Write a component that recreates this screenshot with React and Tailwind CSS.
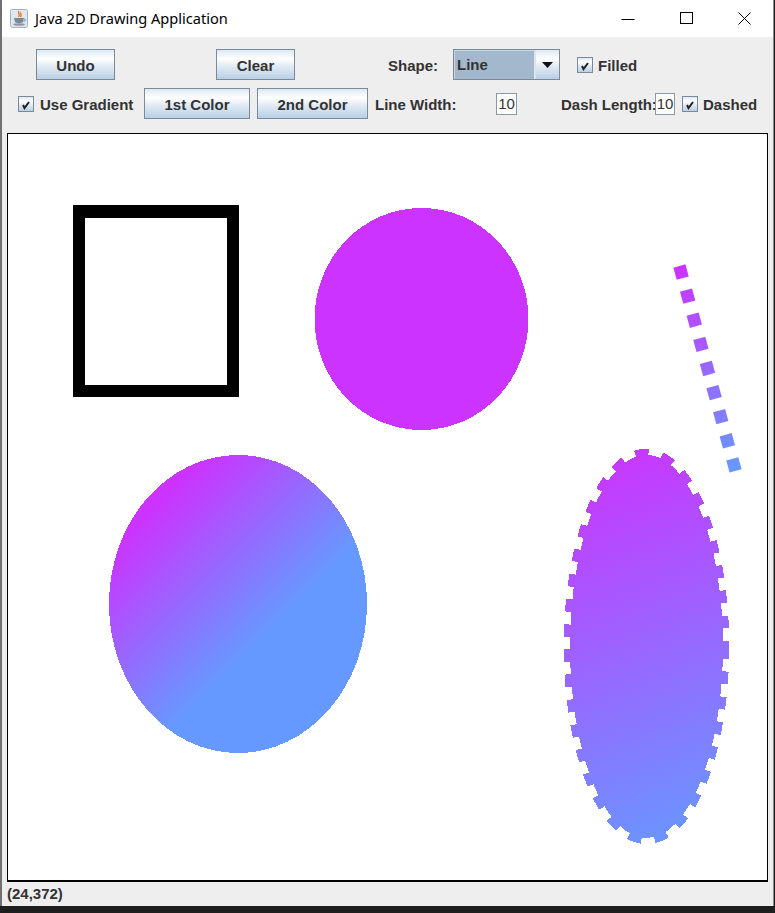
import React from 'react';

const FONT = { fontFamily: '"Liberation Sans", Arial, sans-serif' };
const METAL = 'bg-[linear-gradient(to_bottom,#dde8f3_0%,#ffffff_30%,#dde8f3_60%,#b8cfe5_100%)]';

const MetalButton = ({ label, className = '' }) => (
    <div className={`h-[31px] flex items-center justify-center pt-[4px] border border-[#7a8a99] ${METAL} text-[15px] font-bold text-[#333333] shrink-0 ${className}`}>
        {label}
    </div>
);

const MetalCheck = ({ className = '' }) => (
    <div className={`w-[16px] h-[16px] border border-[#7a8a99] ${METAL} shrink-0 flex items-center justify-center ${className}`}>
        <svg width="14" height="14" viewBox="0 0 14 14">
            <path d="M4 8 L5.5 11 L10 5" fill="none" stroke="#222" strokeWidth="2" />
        </svg>
    </div>
);

const Label = ({ text, className = '' }) => (
    <div className={`pt-[4px] text-[15px] font-bold text-[#333333] whitespace-nowrap shrink-0 ${className}`}>{text}</div>
);

const Field = ({ value, className = '' }) => (
    <div className={`h-[22px] bg-white border border-[#8a99a8] flex items-center justify-center pt-[2px] text-[15px] text-[#333333] shrink-0 ${className}`}>
        {value}
    </div>
);

const JavaIcon = () => (
    <svg width="18" height="19" viewBox="0 0 18 19">
        <rect x="0.5" y="0.5" width="17" height="18" rx="2" fill="#dfe8f1" stroke="#a3b0bd" />
        <path d="M9 2 C7 4, 11 5, 8.5 8 M11 3.5 C10 5, 12 6, 10.5 8" fill="none" stroke="#e8761c" strokeWidth="1.4" />
        <path d="M4 9 L14 9 L13 13 C12 14.5, 6 14.5, 5 13 Z" fill="#7b8794" />
        <path d="M14 10 C16 10, 16 12.5, 13.5 12.5" fill="none" stroke="#7b8794" strokeWidth="1" />
        <ellipse cx="9" cy="15.5" rx="6" ry="1.3" fill="#8d99a5" />
    </svg>
);

const Canvas = () => (
    <svg width="759" height="746" viewBox="8 134 759 746" className="block">
        <defs>
            <linearGradient id="g1" gradientUnits="userSpaceOnUse" x1="180" y1="480" x2="300" y2="600">
                <stop offset="0" stopColor="#cc33ff" />
                <stop offset="1" stopColor="#6699ff" />
            </linearGradient>
            <linearGradient id="g2" gradientUnits="userSpaceOnUse" x1="570" y1="455" x2="723" y2="838">
                <stop offset="0" stopColor="#cc33ff" />
                <stop offset="1" stopColor="#6699ff" />
            </linearGradient>
            <linearGradient id="g3" gradientUnits="userSpaceOnUse" x1="679.4" y1="266" x2="735.6" y2="471">
                <stop offset="0" stopColor="#cc33ff" />
                <stop offset="1" stopColor="#6699ff" />
            </linearGradient>
        </defs>
        <rect x="79" y="211.5" width="154" height="179.5" fill="none" stroke="#000" strokeWidth="12.5" shapeRendering="crispEdges" />
        <ellipse cx="421.5" cy="319" rx="107" ry="111" fill="#cc33ff" shapeRendering="crispEdges" />
        <ellipse cx="238" cy="604" rx="129" ry="149" fill="url(#g1)" shapeRendering="crispEdges" />
        <line x1="679.4" y1="266" x2="735.6" y2="471" stroke="url(#g3)" strokeWidth="12.5" strokeDasharray="12.5 12.5" />
        <ellipse cx="646.5" cy="646.5" rx="76.5" ry="191.5" fill="url(#g2)" stroke="url(#g2)" strokeWidth="12.5" strokeDasharray="12.5 12.5" shapeRendering="crispEdges" />
    </svg>
);

const App = () => {
    return (
        <div className="w-[775px] h-[913px] bg-[#1e1e1e]" style={FONT}>
            <div className="w-[774px] h-[906px] flex flex-col bg-[#eeeeee] border-l-2 border-l-[#707070] border-r border-r-[#8a8a8a]">
                {/* title bar */}
                <div className="h-[37px] bg-white flex items-center shrink-0">
                    <div className="ml-[8px] flex items-center"><JavaIcon /></div>
                    <div className="ml-[7px] text-[14.6px] text-black" style={{ fontFamily: '"Noto Sans", sans-serif' }}>
                        Java 2D Drawing Application
                    </div>
                    <div className="ml-auto flex h-full">
                        <div className="w-[58px] h-full flex items-center justify-center">
                            <svg width="14" height="14" viewBox="0 0 14 14"><path d="M0.5 7.5 H13.5" stroke="#000" strokeWidth="1" /></svg>
                        </div>
                        <div className="w-[58px] h-full flex items-center justify-center">
                            <svg width="13" height="13" viewBox="0 0 13 13"><rect x="0.5" y="0.5" width="12" height="11" fill="none" stroke="#000" strokeWidth="1" /></svg>
                        </div>
                        <div className="w-[58px] h-full flex items-center justify-center">
                            <svg width="13" height="13" viewBox="0 0 13 13"><path d="M0.5 0.5 L12.5 12.5 M12.5 0.5 L0.5 12.5" stroke="#000" strokeWidth="1" /></svg>
                        </div>
                    </div>
                </div>

                {/* toolbar */}
                <div className="pt-[12px] shrink-0">
                    <div className="flex items-center h-[31px]">
                        <MetalButton label="Undo" className="ml-[34px] w-[79px]" />
                        <MetalButton label="Clear" className="ml-[101px] w-[79px]" />
                        <Label text="Shape:" className="ml-[93px] w-[65px]" />
                        <div className="w-[107px] h-[31px] border border-[#7a8a99] flex shrink-0">
                            <div className="flex-1 bg-[#a3b8cc] border-l border-t border-l-[#c8d4df] border-t-[#c8d4df] border-r-2 border-r-[#dbe3eb] flex items-center pl-[2px] pt-[1px] text-[15px] font-bold text-[#333333]">
                                Line
                            </div>
                            <div className={`w-[23px] ${METAL} flex items-center justify-center`}>
                                <svg width="11" height="6" viewBox="0 0 11 6"><path d="M0 0 H11 L5.5 6 Z" fill="#111" /></svg>
                            </div>
                        </div>
                        <MetalCheck className="ml-[17px]" />
                        <Label text="Filled" className="ml-[5px]" />
                    </div>
                    <div className="flex items-center h-[31px] mt-[8px]">
                        <MetalCheck className="ml-[16px]" />
                        <Label text="Use Gradient" className="ml-[6px] w-[104px]" />
                        <MetalButton label="1st Color" className="w-[106px]" />
                        <MetalButton label="2nd Color" className="ml-[7px] w-[111px]" />
                        <Label text="Line Width:" className="ml-[7px] w-[121px]" />
                        <Field value="10" className="w-[21px]" />
                        <Label text="Dash Length:" className="ml-[44px] w-[94px]" />
                        <Field value="10" className="w-[20px]" />
                        <MetalCheck className="ml-[7px]" />
                        <Label text="Dashed" className="ml-[5px]" />
                    </div>
                </div>

                {/* drawing canvas */}
                <div className="mt-[14px] ml-[5px] w-[761px] h-[749px] border border-black border-b-2 bg-white shrink-0">
                    <Canvas />
                </div>

                {/* status */}
                <div className="flex-1 flex items-center pl-[5px] text-[15px] font-bold text-[#333333]">
                    (24,372)
                </div>
            </div>
        </div>
    );
};

export default App;
